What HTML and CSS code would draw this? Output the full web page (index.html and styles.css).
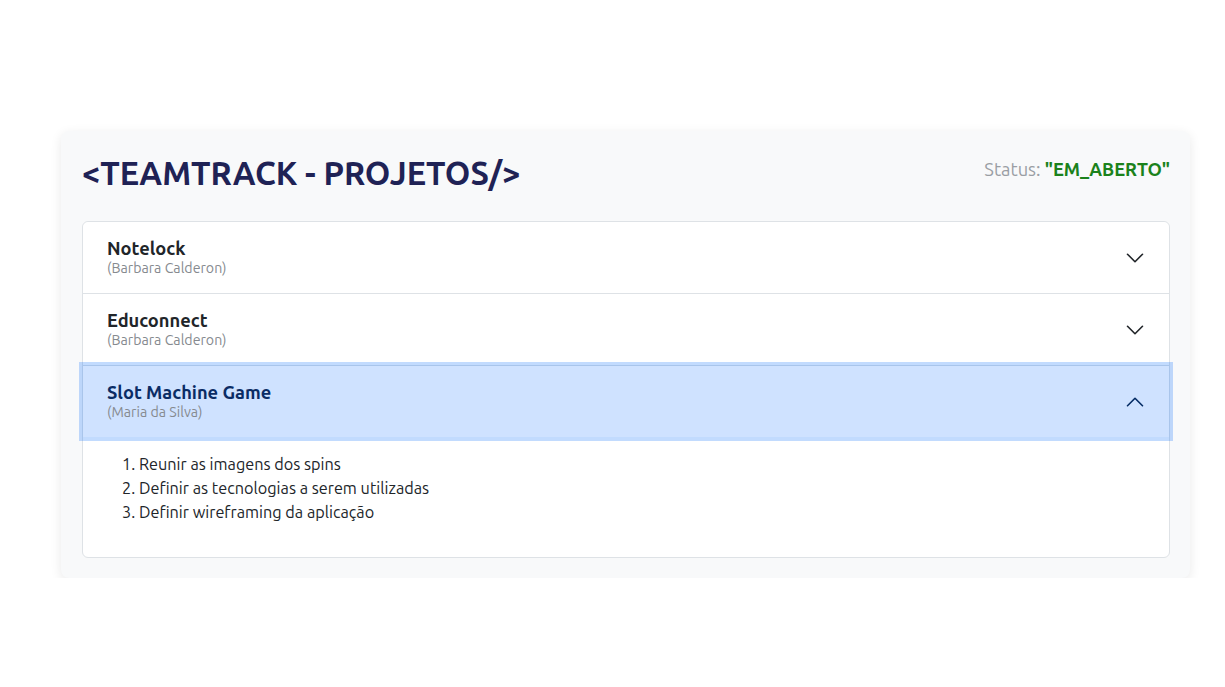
FILE: index.html
```html
<!DOCTYPE html>
<html lang="pt">
<head>
<meta charset="utf-8">
<title>TeamTrack - Projetos</title>
<link rel="stylesheet" href="styles.css">
</head>
<body>
<main class="card">
  <header class="card-head">
    <h1 class="title">&lt;TEAMTRACK - PROJETOS/&gt;</h1>
    <p class="status">Status: <strong class="status-value">"EM_ABERTO"</strong></p>
  </header>
  <section class="accordion">
    <div class="acc-item">
      <button class="acc-btn">
        <span class="acc-text">
          <span class="acc-title">Notelock</span>
          <span class="acc-sub">(Barbara Calderon)</span>
        </span>
        <svg class="chev" viewBox="0 0 16 16" width="20" height="20"><path d="M2 5l6 6 6-6" fill="none" stroke="#212529" stroke-width="1.3" stroke-linecap="round" stroke-linejoin="round"/></svg>
      </button>
    </div>
    <div class="acc-item">
      <button class="acc-btn">
        <span class="acc-text">
          <span class="acc-title">Educonnect</span>
          <span class="acc-sub">(Barbara Calderon)</span>
        </span>
        <svg class="chev" viewBox="0 0 16 16" width="20" height="20"><path d="M2 5l6 6 6-6" fill="none" stroke="#212529" stroke-width="1.3" stroke-linecap="round" stroke-linejoin="round"/></svg>
      </button>
    </div>
    <div class="acc-item open">
      <button class="acc-btn active">
        <span class="acc-text">
          <span class="acc-title">Slot Machine Game</span>
          <span class="acc-sub">(Maria da Silva)</span>
        </span>
        <svg class="chev" viewBox="0 0 16 16" width="20" height="20"><path d="M2 11l6-6 6 6" fill="none" stroke="#052c65" stroke-width="1.3" stroke-linecap="round" stroke-linejoin="round"/></svg>
      </button>
      <div class="acc-body">
        <ol class="tasks">
          <li>Reunir as imagens dos spins</li>
          <li>Definir as tecnologias a serem utilizadas</li>
          <li>Definir wireframing da aplicação</li>
        </ol>
      </div>
    </div>
  </section>
</main>
</body>
</html>
```

FILE: styles.css
```css
* { box-sizing: border-box; }
html, body { margin: 0; padding: 0; background: #fff; }
body {
  font-family: "Ubuntu", "Noto Sans", "Open Sans", sans-serif;
  color: #212529;
  padding: 131px 35px 0 61px;
}
.card {
  background: #f8f9fa;
  border-radius: 8px;
  box-shadow: 0 3px 12px rgba(0,0,0,0.09);
  padding: 21px 20px 20px 21px;
}
.card-head {
  display: flex;
  justify-content: space-between;
  align-items: flex-start;
  margin-bottom: 29px;
}
.title {
  margin: 2px 0 0 0;
  font-size: 32.5px;
  font-weight: 700;
  line-height: 38px;
  color: #1f2255;
  letter-spacing: 0;
}
.status {
  margin: 5px 0 0 0;
  font-size: 18.3px;
  line-height: 24px;
  color: #9a9ea4;
}
.status-value { color: #1b821b; font-weight: 700; }
.accordion {
  background: #fff;
  border: 1px solid #dee2e6;
  border-radius: 6px;
}
.acc-item { border-top: 1px solid #dee2e6; }
.acc-item:first-child { border-top: none; }
.acc-btn {
  display: flex;
  align-items: center;
  justify-content: space-between;
  width: 100%;
  border: none;
  background: #fff;
  padding: 16px 24px;
  text-align: left;
  font-family: inherit;
  cursor: pointer;
  border-radius: 6px 6px 0 0;
}
.acc-text { display: flex; flex-direction: column; }
.acc-title { font-size: 18.25px; font-weight: 700; line-height: 21px; color: #212529; }
.acc-sub { font-size: 14.2px; line-height: 18px; color: #868a8f; }
.acc-btn.active {
  background: #cfe2ff;
  border-radius: 0;
  box-shadow: 0 0 0 4px rgba(13,110,253,0.25);
  position: relative;
  z-index: 2;
}
.acc-btn.active .acc-title { color: #0a2c65; }
.chev { flex: none; }
.acc-body { padding: 15px 20px 17px 20px; }
.tasks {
  margin: 0 0 16px 0;
  padding-left: 36px;
  font-size: 16.25px;
  line-height: 24px;
  color: #212529;
}
```
